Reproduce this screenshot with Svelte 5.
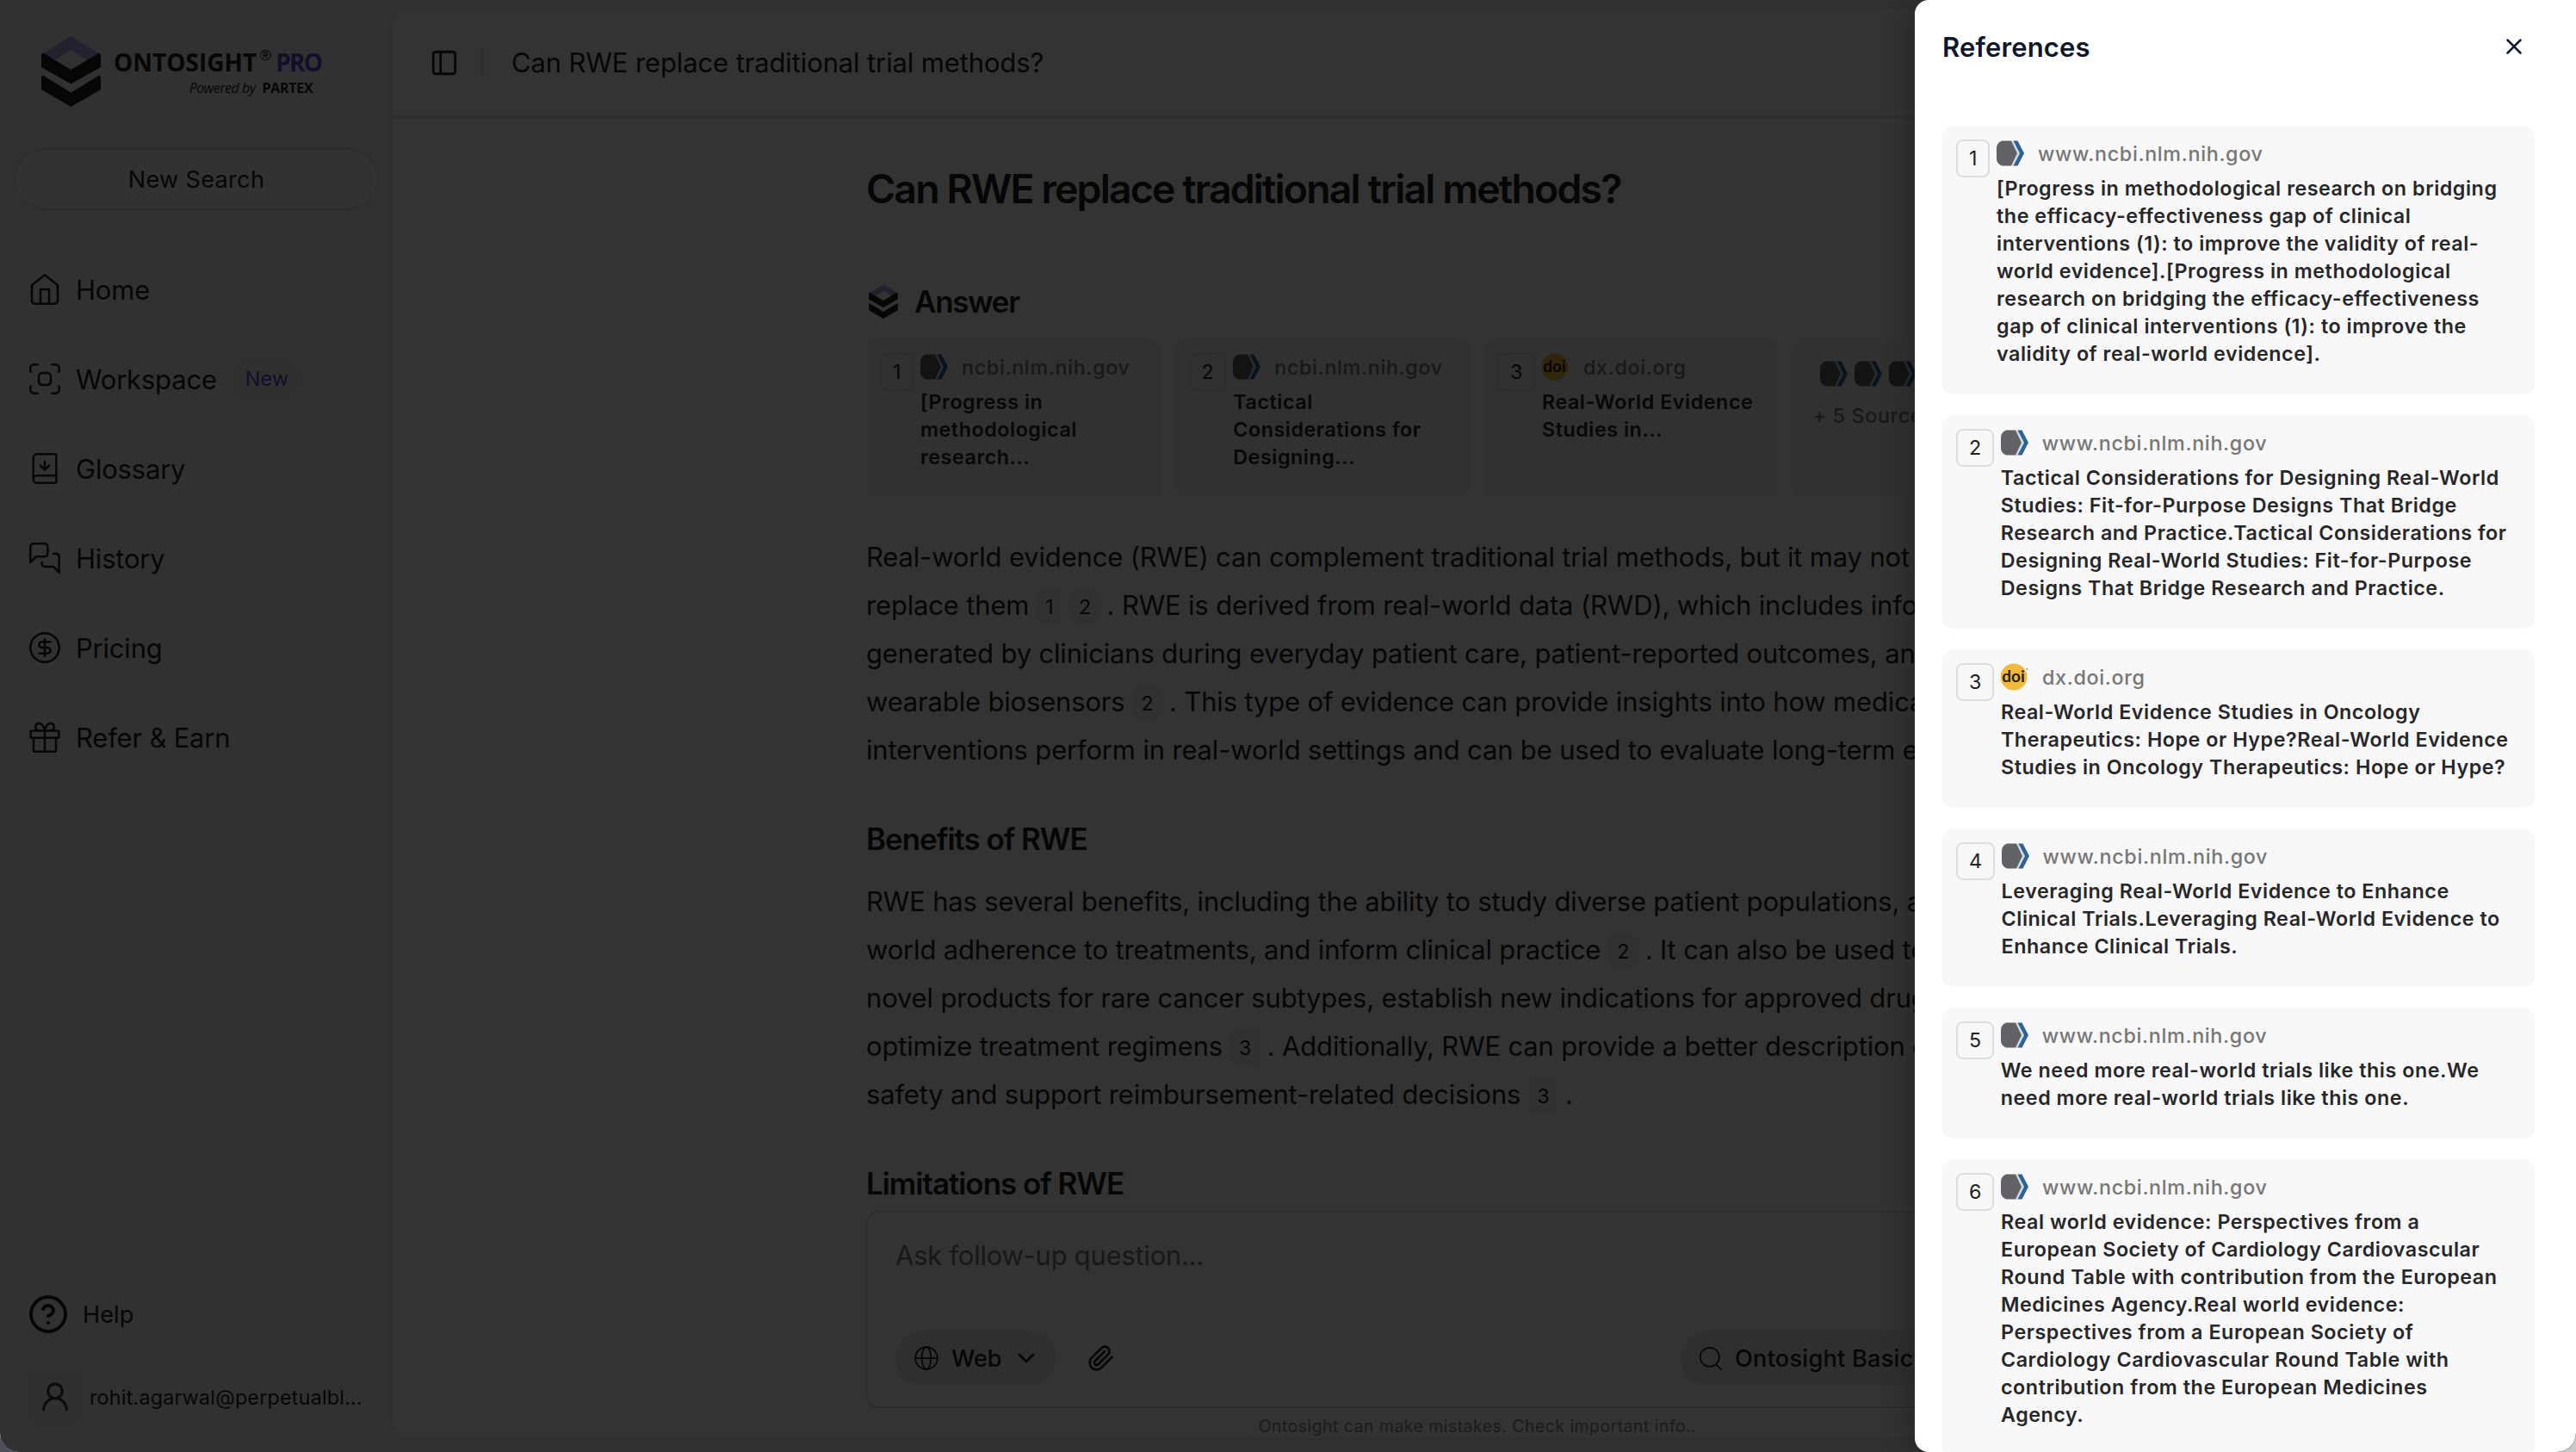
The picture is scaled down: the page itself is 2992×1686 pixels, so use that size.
<script lang="ts">
  type Source = { id: number; kind: 'ncbi' | 'doi'; domain: string; title: string[] };

  const icons: Record<string, string> = {
    home: '<path d="m3 9 9-7 9 7v11a2 2 0 0 1-2 2H5a2 2 0 0 1-2-2z"/><path d="M9 22V12h6v10"/>',
    workspace:
      '<path d="M2 7V4.500A2.500 2.500 0 0 1 4.500 2H7"/><path d="M17 2h2.500A2.500 2.500 0 0 1 22 4.500V7"/><path d="M22 17v2.500a2.500 2.500 0 0 1-2.500 2.500H17"/><path d="M7 22H4.500A2.500 2.500 0 0 1 2 19.500V17"/><rect x="7.800" y="7.800" width="8.400" height="8.400" rx="2.500"/>',
    glossary:
      '<path d="M12 13V7"/><path d="m9 10 3 3 3-3"/><path d="M4 19.500v-15A2.500 2.500 0 0 1 6.500 2H19a1 1 0 0 1 1 1v18a1 1 0 0 1-1 1H6.500a1 1 0 0 1 0-5H20"/>',
    history:
      '<path d="M14 9a2 2 0 0 1-2 2H6l-4 4V4c0-1.100.900-2 2-2h8a2 2 0 0 1 2 2z"/><path d="M18 9h2a2 2 0 0 1 2 2v11l-4-4h-6a2 2 0 0 1-2-2v-1"/>',
    pricing:
      '<circle cx="12" cy="12" r="10"/><path d="M16 8h-6a2 2 0 1 0 0 4h4a2 2 0 1 1 0 4H8"/><path d="M12 18V6"/>',
    gift:
      '<rect x="2.200" y="7.500" width="19.600" height="5" rx=".8"/><path d="M12 7.500V22"/><path d="M19.800 12.500v8.700a.8.8 0 0 1-.8.8H5a.8.8 0 0 1-.8-.8v-8.700"/><path d="M7.700 7.500a2.700 2.700 0 0 1 0-5.300C10.200 2.200 11.400 4.500 12 7.500c.6-3 1.800-5.300 4.300-5.300a2.700 2.700 0 0 1 0 5.300"/>',
    help:
      '<circle cx="12" cy="12" r="10"/><path d="M9.090 9a3 3 0 0 1 5.830 1c0 2-3 3-3 3"/><path d="M12 17h.01"/>',
    user: '<circle cx="12" cy="8" r="5"/><path d="M20 21a8 8 0 0 0-16 0"/>',
    panel: '<rect x="3" y="3" width="18" height="18" rx="2"/><path d="M9 3v18"/>',
    globe:
      '<circle cx="12" cy="12" r="11"/><ellipse cx="12" cy="12" rx="4.600" ry="11"/><path d="M1 12h22"/>',
    chevron: '<path d="m6 9 6 6 6-6"/>',
    clip:
      '<path d="m21.440 11.050-9.190 9.190a6 6 0 0 1-8.490-8.490l8.570-8.570A4 4 0 1 1 18 8.840l-8.590 8.570a2 2 0 0 1-2.830-2.830l8.490-8.480"/>',
    search: '<circle cx="11" cy="11" r="9.500"/><path d="m17.500 18.500 5 5"/>',
    close: '<path d="M18 6 6 18"/><path d="m6 6 12 12"/>'
  };

  const nav = [
    { icon: 'home', label: 'Home' },
    { icon: 'workspace', label: 'Workspace', badge: 'New' },
    { icon: 'glossary', label: 'Glossary' },
    { icon: 'history', label: 'History' },
    { icon: 'pricing', label: 'Pricing' },
    { icon: 'gift', label: 'Refer & Earn' }
  ];

  const sources: Source[] = [
    { id: 1, kind: 'ncbi', domain: 'ncbi.nlm.nih.gov', title: ['[Progress in', 'methodological', 'research...'] },
    { id: 2, kind: 'ncbi', domain: 'ncbi.nlm.nih.gov', title: ['Tactical', 'Considerations for', 'Designing...'] },
    { id: 3, kind: 'doi', domain: 'dx.doi.org', title: ['Real-World Evidence', 'Studies in...'] }
  ];

  // numbers inside a line are citation chips
  const intro: (string | number)[][] = [
    ['Real-world evidence (RWE) can complement traditional trial methods, but it may not'],
    ['replace them', 1, 2, '. RWE is derived from real-world data (RWD), which includes info'],
    ['generated by clinicians during everyday patient care, patient-reported outcomes, and'],
    ['wearable biosensors', 2, '. This type of evidence can provide insights into how medical'],
    ['interventions perform in real-world settings and can be used to evaluate long-term e']
  ];

  const benefits: (string | number)[][] = [
    ['RWE has several benefits, including the ability to study diverse patient populations, a'],
    ['world adherence to treatments, and inform clinical practice', 2, '. It can also be used to'],
    ['novel products for rare cancer subtypes, establish new indications for approved drug'],
    ['optimize treatment regimens', 3, '. Additionally, RWE can provide a better description o'],
    ['safety and support reimbursement-related decisions', 3, '.']
  ];

  const references: Source[] = [
    {
      id: 1,
      kind: 'ncbi',
      domain: 'www.ncbi.nlm.nih.gov',
      title: [
        '[Progress in methodological research on bridging',
        'the efficacy-effectiveness gap of clinical',
        'interventions (1): to improve the validity of real-',
        'world evidence].[Progress in methodological',
        'research on bridging the efficacy-effectiveness',
        'gap of clinical interventions (1): to improve the',
        'validity of real-world evidence].'
      ]
    },
    {
      id: 2,
      kind: 'ncbi',
      domain: 'www.ncbi.nlm.nih.gov',
      title: [
        'Tactical Considerations for Designing Real-World',
        'Studies: Fit-for-Purpose Designs That Bridge',
        'Research and Practice.Tactical Considerations for',
        'Designing Real-World Studies: Fit-for-Purpose',
        'Designs That Bridge Research and Practice.'
      ]
    },
    {
      id: 3,
      kind: 'doi',
      domain: 'dx.doi.org',
      title: [
        'Real-World Evidence Studies in Oncology',
        'Therapeutics: Hope or Hype?Real-World Evidence',
        'Studies in Oncology Therapeutics: Hope or Hype?'
      ]
    },
    {
      id: 4,
      kind: 'ncbi',
      domain: 'www.ncbi.nlm.nih.gov',
      title: [
        'Leveraging Real-World Evidence to Enhance',
        'Clinical Trials.Leveraging Real-World Evidence to',
        'Enhance Clinical Trials.'
      ]
    },
    {
      id: 5,
      kind: 'ncbi',
      domain: 'www.ncbi.nlm.nih.gov',
      title: ['We need more real-world trials like this one.We', 'need more real-world trials like this one.']
    },
    {
      id: 6,
      kind: 'ncbi',
      domain: 'www.ncbi.nlm.nih.gov',
      title: [
        'Real world evidence: Perspectives from a',
        'European Society of Cardiology Cardiovascular',
        'Round Table with contribution from the European',
        'Medicines Agency.Real world evidence:',
        'Perspectives from a European Society of',
        'Cardiology Cardiovascular Round Table with',
        'contribution from the European Medicines',
        'Agency.'
      ]
    }
  ];
</script>

{#snippet icon(name: string, cls: string)}
  <svg class="icon {cls}" viewBox="0 0 24 24">{@html icons[name]}</svg>
{/snippet}

{#snippet mark(cls: string)}
  <svg class={cls} viewBox="0 0 69 82">
    <path fill="#b0a4e3" d="M34.500 0 67 20 55 28.500 34.500 16 14 28.500 2 20z" />
    <path fill="#1f1f1f" d="M2 19.500 34.500 39 67 19.500l2 1.500v15L34.500 55.500 0 36V21z" />
    <path fill="#1f1f1f" d="M2 45.500 34.500 65.500 67 45.500l2 1.500v15L34.500 82 0 62V47z" />
  </svg>
{/snippet}

{#snippet favicon(kind: string)}
  <svg class="favicon" viewBox="0 0 32 32">
    {#if kind === 'ncbi'}
      <path fill="#d3dbe2" d="M16 1.500h5L28 16l-7 14.500h-5L24 16z" />
      <path fill="#606266" d="M6 1.500h11L24 16l-7 14.500H6Q0 28 0 22V10Q0 4 6 1.500z" />
      <path fill="#2f6096" d="M19.500 1.500h5L32 16l-7.500 14.500h-5L27 16z" />
    {:else}
      <circle cx="15" cy="16" r="15.500" fill="#f3b93c" />
      <text x="14.500" y="22" class="doi">doi</text>
      <circle cx="30.500" cy="7" r="1" fill="#888" />
    {/if}
  </svg>
{/snippet}

{#snippet sourceCard(source: Source)}
  <div class="card">
    <span class="num">{source.id}</span>
    <div>
      <div class="origin">
        {@render favicon(source.kind)}
        <span>{source.domain}</span>
      </div>
      <div class="card-title">
        {#each source.title as line}
          <div>{line}</div>
        {/each}
      </div>
    </div>
  </div>
{/snippet}

{#snippet prose(lines: (string | number)[][])}
  <div class="prose">
    {#each lines as line}
      <div class="line">
        {#each line as part}
          {#if typeof part === 'number'}
            <span class="cite">{part}</span>
          {:else}
            <span>{part}</span>
          {/if}
        {/each}
      </div>
    {/each}
  </div>
{/snippet}

<div class="window">
  <aside class="sidebar">
    <div class="brand">
      {@render mark('brand-mark')}
      <div class="brand-text">
        <div class="wordmark"><b>ONTOSIGHT</b><sup>®</sup><b class="pro">PRO</b></div>
        <div class="powered"><i>Powered by</i><b>PARTEX</b></div>
      </div>
    </div>

    <button class="new-search">New Search</button>

    <nav>
      {#each nav as item}
        <div class="nav-item">
          {@render icon(item.icon, 'i40')}
          <span>{item.label}</span>
          {#if item.badge}<span class="badge">{item.badge}</span>{/if}
        </div>
      {/each}
    </nav>

    <div class="help">
      {@render icon('help', 'i48')}
      <span>Help</span>
    </div>
    <div class="account">
      <div class="avatar">{@render icon('user', 'i40 bold')}</div>
      <span>rohit.agarwal@perpetualbl...</span>
    </div>
  </aside>

  <main class="panel">
    <header>
      {@render icon('panel', 'i34')}
      <span class="divider"></span>
      <span class="crumb">Can RWE replace traditional trial methods?</span>
    </header>

    <article>
      <h1>Can RWE replace traditional trial methods?</h1>
      <div class="answer">
        {@render mark('answer-mark')}
        <h2>Answer</h2>
      </div>

      <div class="sources">
        {#each sources as source}
          {@render sourceCard(source)}
        {/each}
        <div class="more">
          <div class="stack">
            {#each [1, 2, 3] as _}
              {@render favicon('ncbi')}
            {/each}
          </div>
          <span>+ 5 Sources</span>
        </div>
      </div>

      {@render prose(intro)}
      <h3>Benefits of RWE</h3>
      {@render prose(benefits)}
      <h3>Limitations of RWE</h3>
    </article>

    <div class="composer">
      <div class="placeholder">Ask follow-up question...</div>
      <div class="tools">
        <div class="pill web">
          {@render icon('globe', 'i28')}
          <span>Web</span>
          {@render icon('chevron', 'i32')}
        </div>
        {@render icon('clip', 'i32 clip')}
        <div class="pill model">
          {@render icon('search', 'i28')}
          <span>Ontosight Basic</span>
        </div>
      </div>
    </div>
    <p class="disclaimer">Ontosight can make mistakes. Check important info..</p>
  </main>

  <div class="overlay"></div>

  <section class="drawer">
    <div class="drawer-head">
      <h2>References</h2>
      {@render icon('close', 'i30')}
    </div>
    <div class="refs">
      {#each references as reference}
        {@render sourceCard(reference)}
      {/each}
    </div>
  </section>
</div>

<style>
  :global(body) {
    background: linear-gradient(90deg, #4b4f58 0, #4b4f58 60%, #c9c9cb 90%);
  }

  .window {
    position: relative;
    box-sizing: border-box;
    width: 2992px;
    height: 1686px;
    display: flex;
    overflow: hidden;
    border-radius: 0 0 22px 22px;
    background: #f5f5f5;
    color: #222;
    font-family: Inter, 'Liberation Sans', sans-serif;
    font-size: 31px;
    white-space: nowrap;
  }

  h1,
  h2,
  h3,
  p {
    margin: 0;
    font-weight: 600;
  }

  .icon {
    flex: none;
    fill: none;
    stroke: currentColor;
    stroke-width: 1.5;
    stroke-linecap: round;
    stroke-linejoin: round;
  }

  .i28 { width: 28px; height: 28px; }
  .i30 { width: 30px; height: 30px; stroke-width: 2; }
  .i32 { width: 32px; height: 32px; stroke-width: 2; }
  .i34 { width: 34px; height: 34px; stroke-width: 2; }
  .i40 { width: 40px; height: 40px; }
  .i48 { width: 48px; height: 48px; stroke-width: 2; }
  .bold { stroke-width: 2; }

  /* sidebar */
  .sidebar {
    box-sizing: border-box;
    width: 456px;
    flex: none;
    display: flex;
    flex-direction: column;
    padding: 42px 16px 32px 15px;
    border-left: 1px solid #fff;
  }

  .brand {
    display: flex;
    gap: 15px;
    height: 130px;
    padding-left: 32px;
  }

  .brand-mark {
    width: 69px;
    height: 82px;
  }

  .brand-text {
    font-family: 'Open Sans', 'Noto Sans', sans-serif;
    padding-top: 11px;
  }

  .wordmark {
    display: flex;
    font-size: 28px;
    line-height: 38px;
  }

  .wordmark sup {
    font-size: 17px;
    line-height: 22px;
    margin: 0 5px 0 3px;
  }

  .pro {
    color: #5b4bcf;
    letter-spacing: -1.8px;
  }

  .powered {
    display: flex;
    justify-content: flex-end;
    gap: 8px;
    padding-right: 10px;
    font-size: 16px;
    line-height: 22px;
    letter-spacing: -0.3px;
  }

  .powered i {
    letter-spacing: -0.5px;
  }

  .new-search {
    height: 72px;
    border: 2px solid #e0e0e0;
    border-radius: 36px;
    background: #fafafa;
    color: inherit;
    font-family: inherit;
    font-size: 27.2px;
    letter-spacing: 0.25px;
    padding: 0;
  }

  nav {
    padding-top: 40px;
    letter-spacing: -0.2px;
  }

  .nav-item {
    display: flex;
    align-items: center;
    gap: 16px;
    height: 104px;
    padding-left: 16px;
  }

  .badge {
    margin-left: -1px;
    padding: 0 18px;
    border-radius: 22px;
    background: #ededf6;
    color: #5546d8;
    font-size: 23.3px;
    line-height: 44px;
    letter-spacing: 0.2px;
  }

  .help {
    display: flex;
    align-items: center;
    gap: 16px;
    margin-top: auto;
    padding-left: 16px;
    font-size: 27.2px;
  }

  .account {
    display: flex;
    align-items: center;
    gap: 8px;
    margin-top: 40px;
    padding-left: 16px;
    font-size: 23.3px;
    letter-spacing: 0.22px;
  }

  .avatar {
    display: flex;
    align-items: center;
    justify-content: center;
    width: 64px;
    height: 64px;
    border-radius: 12px;
    background: #efefef;
    color: #334155;
  }

  /* main panel */
  .panel {
    display: flex;
    flex-direction: column;
    width: 2520px;
    height: 1660px;
    margin-top: 10px;
    border-radius: 20px;
    background: #fff;
    box-shadow: 0 0 6px rgba(0, 0, 0, 0.12);
  }

  header {
    display: flex;
    align-items: center;
    height: 125px;
    padding-left: 43px;
    border-bottom: 2px solid #e0e0e0;
  }

  .divider {
    width: 2px;
    height: 32px;
    margin: 0 33px 0 26px;
    background: #e0e0e0;
  }

  .crumb {
    letter-spacing: -0.12px;
  }

  article {
    flex: 1;
    min-height: 0;
    overflow: hidden;
    width: 1420px;
    margin: 0 auto;
    padding-top: 52px;
  }

  h1 {
    font-size: 46.5px;
    line-height: 60px;
    letter-spacing: -1.91px;
  }

  .answer {
    display: flex;
    align-items: center;
    gap: 19px;
    margin-top: 79px;
    padding-left: 3px;
  }

  .answer-mark {
    width: 34px;
    height: 40px;
  }

  .answer h2,
  h3 {
    font-size: 35px;
    line-height: 44px;
    letter-spacing: -1.05px;
  }

  .answer h2 {
    letter-spacing: -1.3px;
  }

  .sources {
    display: grid;
    grid-template-columns: repeat(4, 342.5px);
    gap: 16px;
    height: 184px;
    margin: 22px 0 40px;
  }

  .card {
    display: flex;
    align-items: flex-start;
    gap: 8px;
    padding: 16px 16px 31px;
    border-radius: 12px;
    background: #f8f8f8;
    letter-spacing: 0.54px;
  }

  .sources .card {
    box-sizing: border-box;
    background: #f4f4f4;
  }

  .num {
    padding: 0 12px 0 13px;
    border: 2px solid #dedede;
    border-radius: 8px;
    font-size: 23.3px;
    line-height: 40px;
  }

  .origin {
    display: flex;
    align-items: center;
    gap: 16px;
    height: 32px;
    margin-bottom: 9px;
    color: #777;
    font-size: 23.3px;
    font-weight: 500;
    letter-spacing: 0.67px;
  }

  .favicon {
    flex: none;
    width: 32px;
    height: 32px;
  }

  .doi {
    font: bold 19px Lato, sans-serif;
    letter-spacing: 0;
    text-anchor: middle;
    fill: #231f20;
  }

  .card-title {
    color: #27272a;
    font-size: 23.3px;
    font-weight: 600;
    line-height: 32px;
  }

  .more {
    box-sizing: border-box;
    padding: 24px;
    border-radius: 12px;
    background: #f4f4f4;
    color: #777;
    font-size: 23.3px;
    font-weight: 500;
    letter-spacing: 0.65px;
  }

  .more .favicon:nth-child(2) ~ .favicon {
    z-index: 0;
  }

  .stack {
    display: flex;
    gap: 8px;
    height: 32px;
    margin-bottom: 18px;
    padding-left: 8px;
  }

  .line {
    display: flex;
    align-items: center;
    height: 56px;
    letter-spacing: -0.17px;
  }

  .cite {
    height: 40px;
    margin: 4px 0 0 8px;
    padding: 0 10px 0 11px;
    border-radius: 8px;
    background: #f3f3f8;
    font-size: 23.3px;
    line-height: 42px;
    letter-spacing: 0.3px;
  }

  .cite + span:not(.cite) {
    margin-left: 8px;
  }

  h3 {
    margin: 54px 0 22px;
  }

  .composer {
    box-sizing: border-box;
    width: 1420px;
    height: 229px;
    margin: 0 auto;
    padding: 32px 32px 0;
    border: 2px solid #e0e0e0;
    border-radius: 14px;
  }

  .placeholder {
    height: 105px;
    line-height: 36px;
    color: #777;
    letter-spacing: -0.25px;
  }

  .tools {
    display: flex;
    align-items: center;
    font-size: 27.2px;
    font-weight: 500;
  }

  .pill {
    display: flex;
    align-items: center;
    height: 64px;
    border-radius: 32px;
    background: #ebebeb;
  }

  .web {
    box-sizing: border-box;
    width: 186px;
    padding-left: 22px;
  }

  .web span {
    margin: 0 12px 0 15px;
  }

  .clip {
    margin-left: 37px;
  }

  .model {
    box-sizing: border-box;
    width: 440px;
    margin-left: auto;
    padding-left: 21px;
    gap: 14px;
    letter-spacing: 0.22px;
  }

  .disclaimer {
    height: 35px;
    color: #888;
    font-size: 19.4px;
    font-weight: 400;
    line-height: 42px;
    text-align: center;
    letter-spacing: 0.5px;
  }

  /* references drawer */
  .overlay {
    position: absolute;
    inset: 0;
    background: rgba(0, 0, 0, 0.8);
  }

  .drawer {
    position: absolute;
    top: 0;
    right: 0;
    box-sizing: border-box;
    width: 768px;
    height: 1686px;
    padding: 0 48px 0 32px;
    overflow: hidden;
    border-radius: 16px 0 22px 16px;
    background: #fff;
    box-shadow: -10px 0 30px rgba(0, 0, 0, 0.2);
  }

  .drawer-head {
    display: flex;
    align-items: center;
    justify-content: space-between;
    height: 108px;
    margin-bottom: 38px;
    padding-right: 9px;
    color: #0f172a;
  }

  .drawer-head h2 {
    font-size: 31px;
    letter-spacing: 0.15px;
  }

  .refs {
    display: grid;
    gap: 24px;
  }
</style>
